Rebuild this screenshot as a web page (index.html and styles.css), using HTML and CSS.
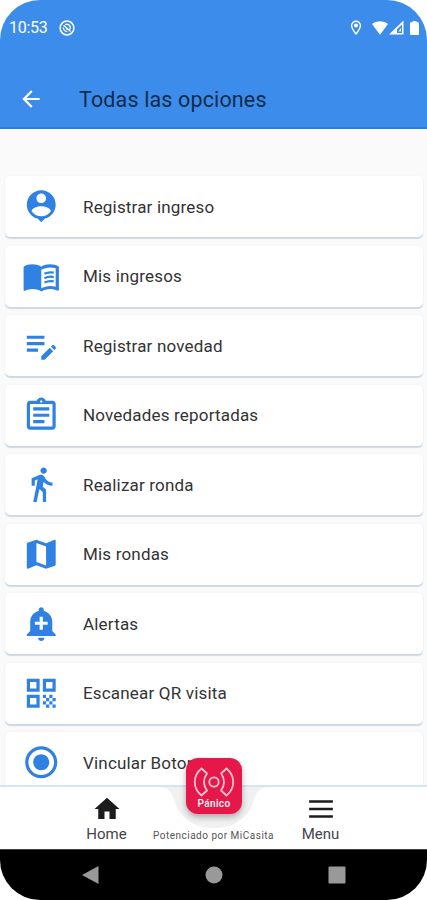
FILE: index.html
```html
<!DOCTYPE html>
<html lang="es">
<head>
  <meta charset="UTF-8" />
  <meta name="viewport" content="width=device-width, initial-scale=1.0"/>
  <title>Todas las opciones</title>
  <link rel="stylesheet" href="styles.css">
</head>
<body>
  <div class="phone">
    <header class="header">
      <div class="status-bar">
        <span class="time">10:53</span>
        <svg class="status-app" viewBox="0 0 16 16">
          <circle cx="8" cy="8" r="6.9" fill="none" stroke="#fff" stroke-width="1.5"/>
          <path d="M4.6 5.2l7 6.2M6.2 4.7c2-1.3 5 .2 5.1 2.7 0 .8-.2 1.4-.6 2M4.4 7.4c-.2 2.3 1.5 4.2 3.8 4.2M7 7.4c.3 1.4 1.2 2.3 2.6 2.4" fill="none" stroke="#fff" stroke-width="1.3"/>
        </svg>
        <div class="status-right">
          <svg class="status-pin" viewBox="0 0 12 16">
            <path d="M6 1.2a4.4 4.4 0 0 0-4.4 4.4C1.6 8.8 6 14 6 14s4.4-5.2 4.4-8.4A4.4 4.4 0 0 0 6 1.2z" fill="none" stroke="#fff" stroke-width="1.4"/>
            <circle cx="6" cy="5.6" r="2" fill="#fff"/>
          </svg>
          <svg class="status-wifi" viewBox="0 0 16 14"><path d="M0 3C4.5-.7 11.500-.7 16 3L8 13.800z" fill="#fff"/></svg>
          <svg class="status-signal" viewBox="0 0 15 15"><path d="M0 14.500L14.500.5v14zM8 12.900h5V4.500L8 9.300z" fill="#fff" fill-rule="evenodd"/><path d="M9.500 11.500h2.500V7.500z" fill="#fff"/></svg>
          <svg class="status-battery" viewBox="0 0 9 14"><path d="M2.500 0h4v1.300H8q1 0 1 1V13q0 1-1 1H1q-1 0-1-1V2.300q0-1 1-1h1.500z" fill="#fff"/></svg>
        </div>
      </div>
      <div class="title-bar">
        <svg class="back" viewBox="0 0 24 24"><path d="M20 11H7.830l5.590-5.590L12 4l-8 8 8 8 1.410-1.410L7.830 13H20v-2z"/></svg>
        <h1>Todas las opciones</h1>
      </div>
    </header>

    <main class="list">
      <div class="option">
        <svg viewBox="0 0 24 24"><path d="M12 2c-4.970 0-9 4.030-9 9 0 4.170 2.840 7.670 6.690 8.690L12 22l2.310-2.310C18.160 18.670 21 15.170 21 11c0-4.970-4.030-9-9-9zm0 2c1.660 0 3 1.340 3 3s-1.340 3-3 3-3-1.340-3-3 1.340-3 3-3zm0 14.300c-2.500 0-4.710-1.280-6-3.220.030-1.990 4-3.080 6-3.080 1.990 0 5.970 1.090 6 3.080-1.290 1.940-3.500 3.220-6 3.220z"/></svg>
        <span>Registrar ingreso</span>
      </div>
      <div class="option">
        <svg viewBox="0 0 24 24">
          <path d="M21 5c-1.110-.350-2.330-.500-3.500-.500-1.950 0-4.050.400-5.500 1.500-1.450-1.100-3.550-1.500-5.500-1.500S2.450 4.900 1 6v14.650c0 .250.250.500.500.500.100 0 .150-.050.250-.050C3.100 20.450 5.050 20 6.500 20c1.950 0 4.050.400 5.500 1.500 1.350-.850 3.800-1.500 5.500-1.500 1.650 0 3.350.300 4.750 1.050.100.050.150.050.250.050.250 0 .500-.250.500-.500V6c-.600-.450-1.250-.750-2-1zm0 13.500c-1.100-.350-2.300-.500-3.500-.500-1.700 0-4.150.650-5.500 1.500V8c1.350-.850 3.800-1.500 5.500-1.500 1.200 0 2.400.150 3.500.500v11.500z"/>
          <path class="line" d="M14 10.500q2.700-1.300 5.800-.700M14 13.200q2.700-1.300 5.800-.700M14 15.900q2.700-1.300 5.800-.700"/>
        </svg>
        <span>Mis ingresos</span>
      </div>
      <div class="option">
        <svg viewBox="0 0 24 24"><path d="M3 10h11v2H3v-2zm0-2h11V6H3v2zm0 8h7v-2H3v2zm15.010-3.130l.710-.710c.390-.390 1.020-.390 1.410 0l.710.710c.390.390.390 1.020 0 1.410l-.710.710-2.120-2.120zm-.710.710l-5.300 5.300V21h2.120l5.300-5.300-2.120-2.120z"/></svg>
        <span>Registrar novedad</span>
      </div>
      <div class="option">
        <svg viewBox="0 0 24 24"><path d="M7 15h7v2H7zm0-4h10v2H7zm0-4h10v2H7zm12-4h-4.180C14.400 1.840 13.300 1 12 1c-1.300 0-2.400.840-2.820 2H5c-1.100 0-2 .900-2 2v14c0 1.100.900 2 2 2h14c1.100 0 2-.900 2-2V5c0-1.100-.900-2-2-2zm-7-.250c.410 0 .750.340.750.750s-.340.750-.750.750-.750-.340-.750-.750.340-.750.750-.750zM19 19H5V5h14v14z"/></svg>
        <span>Novedades reportadas</span>
      </div>
      <div class="option">
        <svg viewBox="0 0 24 24"><path d="M13.500 5.500c1.100 0 2-.900 2-2s-.900-2-2-2-2 .900-2 2 .900 2 2 2zM9.800 8.900L7 23h2.100l1.800-8 2.100 2v6h2v-7.500l-2.100-2 .600-3C14.800 12 16.800 13 19 13v-2c-1.900 0-3.500-1-4.300-2.400l-1-1.600c-.400-.600-1-1-1.700-1-.300 0-.500.100-.800.100L6 8.300V13h2V9.600l1.800-.700"/></svg>
        <span>Realizar ronda</span>
      </div>
      <div class="option">
        <svg viewBox="0 0 24 24"><path d="M20.500 3l-.160.030L15 5.100 9 3 3.360 4.900c-.210.070-.360.250-.360.480V20.500c0 .280.220.500.500.500l.160-.030L9 18.900l6 2.100 5.640-1.900c.210-.070.360-.250.360-.480V3.500c0-.280-.220-.500-.500-.500zM15 19l-6-2.110V5l6 2.110V19z"/></svg>
        <span>Mis rondas</span>
      </div>
      <div class="option">
        <svg viewBox="0 0 24 24"><path d="M10.010 21.010c0 1.100.890 1.990 1.990 1.990s1.990-.890 1.990-1.990h-3.980zm8.870-4.190V11c0-3.250-2.250-5.970-5.290-6.690v-.720C13.590 2.710 12.880 2 12 2s-1.590.710-1.590 1.590v.720C7.370 5.030 5.120 7.750 5.120 11v5.820L3 18.940V20h18v-1.060l-2.120-2.120zM16 13.010h-3v3h-2v-3H8V11h3V8h2v3h3v2.010z"/></svg>
        <span>Alertas</span>
      </div>
      <div class="option">
        <svg viewBox="0 0 24 24"><path fill-rule="evenodd" d="M3 3h8v8H3zm2 2v4h4V5zM13 3h8v8h-8zm2 2v4h4V5zM3 13h8v8H3zm2 2v4h4v-4zM13 13h2v2h-2zM17 13h2v2h-2zM15 15h2v2h-2zM19 15h2v2h-2zM13 17h2v2h-2zM17 17h2v2h-2zM15 19h2v2h-2zM19 19h2v2h-2z"/></svg>
        <span>Escanear QR visita</span>
      </div>
      <div class="option">
        <svg viewBox="0 0 24 24"><path d="M12 7c-2.760 0-5 2.240-5 5s2.240 5 5 5 5-2.240 5-5-2.240-5-5-5zm0-5C6.480 2 2 6.480 2 12s4.480 10 10 10 10-4.480 10-10S17.520 2 12 2zm0 18c-4.420 0-8-3.580-8-8s3.580-8 8-8 8 3.580 8 8-3.580 8-8 8z"/></svg>
        <span>Vincular Boton</span>
      </div>
    </main>

    <nav class="bottom-nav">
      <svg class="notch" viewBox="0 0 108 44"><path d="M0 0C9 1 12 5 14 13C19 31 34 41 54 41S89 31 94 13C96 5 99 1 108 0z"/></svg>
      <div class="nav-item">
        <svg viewBox="0 0 24 24"><path d="M10 20v-6h4v6h5v-8h3L12 3 2 12h3v8z"/></svg>
        <span>Home</span>
      </div>
      <div class="powered">Potenciado por MiCasita</div>
      <div class="nav-item">
        <svg viewBox="0 0 24 24"><path d="M2.500 5h19v2h-19zM2.500 11h19v2h-19zM2.500 17h19v2h-19z"/></svg>
        <span>Menu</span>
      </div>
      <div class="panic">
        <svg viewBox="0 0 42 30">
          <circle cx="21" cy="15" r="4.700"/>
          <path d="M8.500 1.500C-.5 9-.5 21 8.500 28.500L14 23.500C10 18.500 10 11.500 14 6.500z"/>
          <path d="M33.500 1.500C42.500 9 42.500 21 33.500 28.500L28 23.500C32 18.500 32 11.500 28 6.500z"/>
        </svg>
        <span>Pánico</span>
      </div>
    </nav>

    <div class="system-nav">
      <svg viewBox="0 0 18 20"><path d="M16.500 1v18L0 10z"/></svg>
      <svg viewBox="0 0 18 20"><circle cx="9" cy="10" r="8.500"/></svg>
      <svg viewBox="0 0 18 20"><rect x=".5" y="1.500" width="17" height="17" rx="1"/></svg>
    </div>
  </div>
</body>
</html>
```
FILE: styles.css
```css
* {
  box-sizing: border-box;
}

body {
  margin: 0;
  background: #fff;
  font-family: Roboto, sans-serif;
}

svg {
  display: block;
  flex: none;
}

.phone {
  width: 427px;
  height: 900px;
  display: flex;
  flex-direction: column;
  border-radius: 40px;
  overflow: hidden;
  background: #fafafa;
}

.header {
  height: 129px;
  flex: none;
  background: #3c8cec;
  border-bottom: 2px solid #2b7ddd;
  color: #fff;
}

.status-bar {
  height: 55px;
  display: flex;
  align-items: center;
  padding: 0 8px 0 9px;
}

.time {
  width: 50px;
  font-size: 16px;
  letter-spacing: -0.3px;
}

.status-app {
  width: 16px;
  height: 16px;
}

.status-right {
  display: flex;
  align-items: center;
  margin-left: auto;
}

.status-pin {
  width: 12px;
  height: 16px;
  margin-right: 10px;
}

.status-wifi {
  width: 16px;
  height: 14px;
  margin-right: 1px;
}

.status-signal {
  width: 15px;
  height: 15px;
  margin-right: 6px;
}

.status-battery {
  width: 9px;
  height: 14px;
}

.title-bar {
  height: 72px;
  display: flex;
  align-items: center;
  padding: 16px 18px 0;
}

.back {
  width: 26px;
  height: 26px;
  fill: #fff;
}

h1 {
  margin: 0 0 0 35px;
  font-size: 21.5px;
  font-weight: 400;
  letter-spacing: 0.14px;
  color: #122c4d;
}

.list {
  flex: 1;
  min-height: 0;
  overflow: hidden;
  display: flex;
  flex-direction: column;
  gap: 8.5px;
  padding: 47px 4px 0 5px;
}

.option {
  height: 61px;
  flex: none;
  display: flex;
  align-items: center;
  padding-left: 17px;
  background: #fff;
  border-radius: 5px;
  box-shadow: 0 1.5px 1px #ccd9e5, 0 0 3px rgba(0, 0, 0, 0.04);
}

.option svg {
  width: 38.5px;
  height: 38.5px;
  fill: #2f82e4;
}

.option .line {
  fill: none;
  stroke: #2f82e4;
  stroke-width: 1.4;
}

.option span {
  margin-left: 22.5px;
  font-size: 17px;
  letter-spacing: 0.18px;
  color: #333;
}

.bottom-nav {
  position: relative;
  height: 64px;
  flex: none;
  display: flex;
  justify-content: center;
  background: #fff;
  border-top: 2px solid #d5e5f2;
}

.notch {
  position: absolute;
  left: 160px;
  top: 0;
  width: 108px;
  height: 44px;
  fill: #f1f1f1;
}

.nav-item {
  width: 80px;
  display: flex;
  flex-direction: column;
  align-items: center;
  padding-top: 7px;
}

.nav-item svg {
  width: 30px;
  height: 30px;
  fill: #1c1c1c;
}

.nav-item span {
  margin-top: 1px;
  font-size: 15px;
  line-height: 18px;
  color: #444;
}

.powered {
  position: relative;
  width: 134px;
  padding-top: 42px;
  font-size: 10px;
  letter-spacing: 0.5px;
  line-height: 14px;
  text-align: center;
  white-space: nowrap;
  color: #555;
}

.panic {
  position: absolute;
  left: 186px;
  top: -29px;
  width: 56px;
  height: 56px;
  display: flex;
  flex-direction: column;
  align-items: center;
  padding-top: 9px;
  background: #e6184a;
  border-radius: 12px;
  box-shadow: 0 3px 6px rgba(0, 0, 0, 0.3);
}

.panic svg {
  width: 42px;
  height: 30px;
  fill: none;
  stroke: #ffc4d0;
  stroke-width: 1.8;
  stroke-linejoin: round;
}

.panic span {
  font-size: 10px;
  font-weight: 500;
  letter-spacing: 0.4px;
  line-height: 13px;
  color: #fff;
}

.system-nav {
  height: 51px;
  flex: none;
  display: flex;
  justify-content: center;
  align-items: center;
  gap: 105px;
  background: #000;
  border-top: 1px solid #444;
}

.system-nav svg {
  width: 18px;
  height: 20px;
  fill: #999;
}
```
